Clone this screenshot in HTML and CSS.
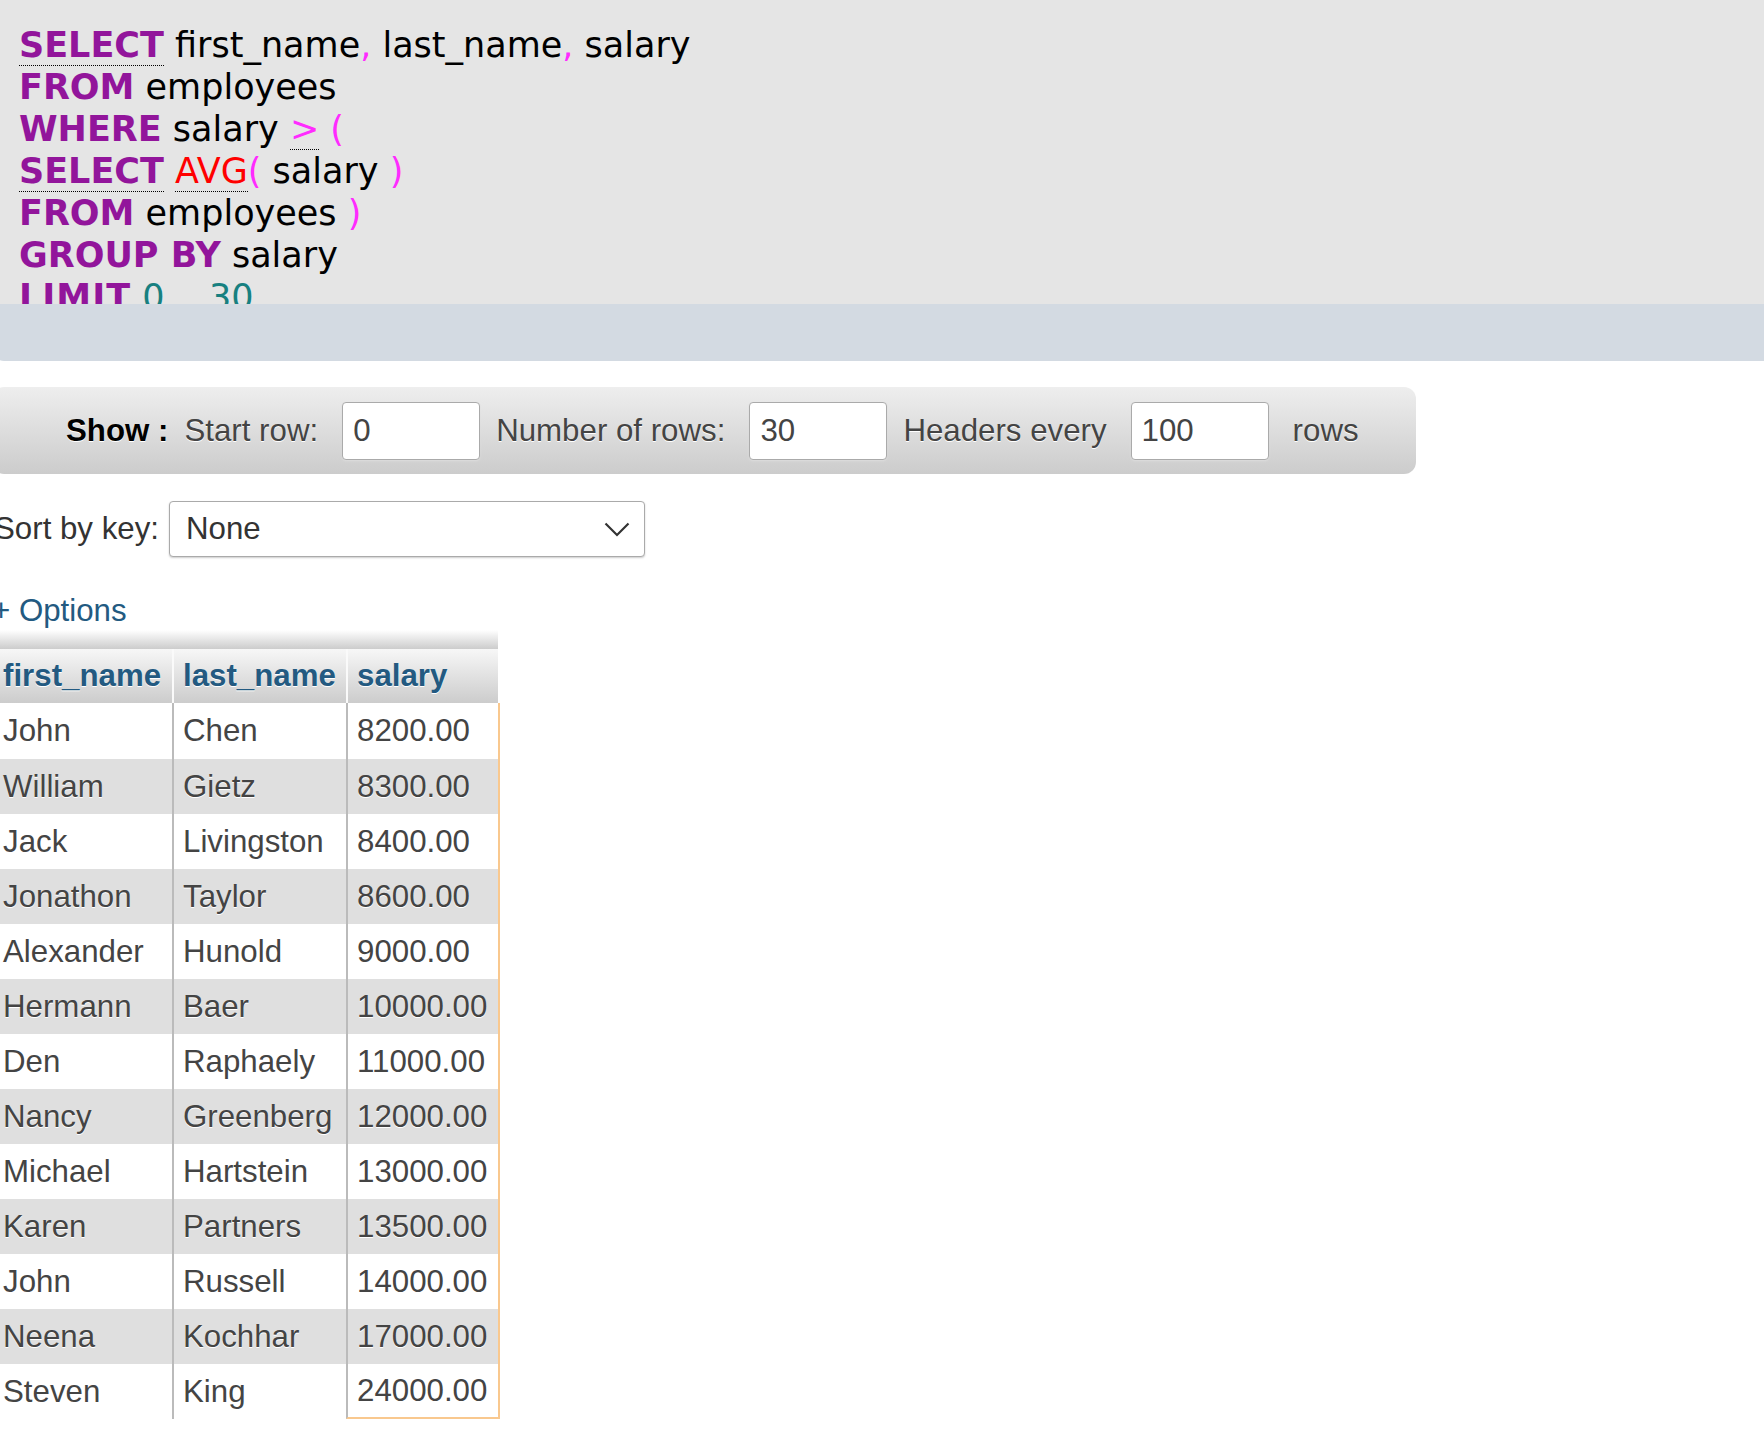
FILE: index.html
```html
<!DOCTYPE html>
<html lang="en">
<head>
<meta charset="utf-8">
<title>SQL result</title>
<link rel="stylesheet" href="styles.css">
</head>
<body>
<div class="page">
  <div class="sql-box">
<pre class="sql"><abbr class="kw">SELECT</abbr> first_name<span class="p">,</span> last_name<span class="p">,</span> salary
<span class="kw">FROM</span> employees
<span class="kw">WHERE</span> salary <abbr class="p">&gt;</abbr> <span class="p">(</span>
<abbr class="kw">SELECT</abbr> <abbr class="fn">AVG</abbr><span class="p">(</span> salary <span class="p">)</span>
<span class="kw">FROM</span> employees <span class="p">)</span>
<span class="kw">GROUP BY</span> salary
<span class="kw kw-limit">LIMIT</span> <span class="num">0</span> <span class="p">,</span>  <span class="num">30</span></pre>
  </div>
  <div class="sql-toolbar"></div>

  <form class="navbar">
    <span class="nav-title">Show :</span>
    <label class="nav-label">Start row:</label>
    <input class="nav-input" type="text" value="0">
    <label class="nav-label">Number of rows:</label>
    <input class="nav-input" type="text" value="30">
    <label class="nav-label">Headers every</label>
    <input class="nav-input" type="text" value="100">
    <span class="nav-label nav-rows">rows</span>
  </form>

  <div class="sort-row">
    <span class="sort-label">Sort by key:</span>
    <div class="select-box">
      <span class="select-value">None</span>
      <svg class="chevron" width="26" height="15" viewBox="0 0 26 15"><path d="M1.5 1.5 L13 13 L24.5 1.5" fill="none" stroke="#333" stroke-width="2.2"/></svg>
    </div>
  </div>

  <div class="options-link">+ Options</div>

  <div class="table-wrap">
    <div class="table-top"></div>
    <table class="data">
      <thead>
        <tr><th class="c1">first_name</th><th class="c2">last_name</th><th class="c3">salary</th></tr>
      </thead>
      <tbody>
        <tr><td>John</td><td>Chen</td><td>8200.00</td></tr>
        <tr><td>William</td><td>Gietz</td><td>8300.00</td></tr>
        <tr><td>Jack</td><td>Livingston</td><td>8400.00</td></tr>
        <tr><td>Jonathon</td><td>Taylor</td><td>8600.00</td></tr>
        <tr><td>Alexander</td><td>Hunold</td><td>9000.00</td></tr>
        <tr><td>Hermann</td><td>Baer</td><td>10000.00</td></tr>
        <tr><td>Den</td><td>Raphaely</td><td>11000.00</td></tr>
        <tr><td>Nancy</td><td>Greenberg</td><td>12000.00</td></tr>
        <tr><td>Michael</td><td>Hartstein</td><td>13000.00</td></tr>
        <tr><td>Karen</td><td>Partners</td><td>13500.00</td></tr>
        <tr><td>John</td><td>Russell</td><td>14000.00</td></tr>
        <tr><td>Neena</td><td>Kochhar</td><td>17000.00</td></tr>
        <tr><td>Steven</td><td>King</td><td>24000.00</td></tr>
      </tbody>
    </table>
  </div>
</div>
</body>
</html>
```

FILE: styles.css
```css
html, body {
  margin: 0;
  padding: 0;
  background: #fff;
}

body {
  font-family: "Liberation Sans", Arial, sans-serif;
  font-size: 31.25px;
  color: #444;
  overflow: hidden;
}

.page {
  margin-left: -8px;
}

/* SQL query box */
.sql-box {
  background: #e5e5e5;
  height: 304px;
  overflow: hidden;
  box-sizing: border-box;
  padding: 24px 0 0 27px;
}

.sql {
  margin: 0;
  font-family: "DejaVu Sans", sans-serif;
  font-size: 35px;
  line-height: 42px;
  color: #000;
  white-space: pre;
}

.sql abbr {
  text-decoration: none;
  border-bottom: 1px dotted #000;
}

.kw {
  color: #92159b;
  font-weight: bold;
}

.kw-limit {
  letter-spacing: 1px;
}

.p {
  color: #ff2bff;
}

.fn {
  color: #f00;
}

.num {
  color: #178080;
}

.sql-toolbar {
  background: #d3dae2;
  height: 57px;
  border-bottom-left-radius: 12px;
}

/* navigation bar */
.navbar {
  display: flex;
  align-items: center;
  gap: 16px;
  width: 1424px;
  height: 87px;
  box-sizing: border-box;
  margin: 26px 0 0 0;
  padding-left: 74px;
  border-radius: 12px;
  background: linear-gradient(#eeeeee, #cccccc);
  text-shadow: 0 1px 0 #fff;
}

.nav-title {
  font-weight: bold;
  color: #000;
}

.nav-label {
  color: #444;
}

.nav-input {
  width: 138px;
  height: 58px;
  box-sizing: border-box;
  margin-left: 8px;
  padding: 0 0 0 10px;
  border: 1px solid #aaa;
  border-radius: 4px;
  background: #fff;
  font-family: "Liberation Sans", Arial, sans-serif;
  font-size: 31.25px;
  color: #444;
  box-shadow: 0 1px 2px #ddd;
  outline: none;
}

.nav-rows {
  margin-left: 8px;
}

/* sort by key */
.sort-row {
  display: flex;
  align-items: center;
  margin-top: 27px;
  padding-left: 2px;
}

.sort-label {
  color: #333;
  margin-right: 10px;
}

.select-box {
  display: flex;
  align-items: center;
  justify-content: space-between;
  width: 476px;
  height: 56px;
  box-sizing: border-box;
  padding: 0 14px 0 16px;
  border: 1px solid #aaa;
  border-radius: 4px;
  background: #fff;
  box-shadow: 0 1px 2px #ccc;
  color: #333;
}

.chevron {
  display: block;
}

/* options link */
.options-link {
  margin-top: 36px;
  height: 36px;
  line-height: 36px;
  color: #235a81;
}

/* results table */
.table-wrap {
  margin-top: 1px;
}

.table-top {
  width: 506px;
  height: 19px;
  background: linear-gradient(#ffffff, #cccccc);
}

.data {
  border-collapse: separate;
  border-spacing: 0;
  table-layout: fixed;
}

.data th,
.data td {
  box-sizing: border-box;
  padding: 0 0 0 11px;
  text-align: left;
  white-space: nowrap;
  text-shadow: 0 1px 0 #fff;
}

.data th + th,
.data td + td {
  padding-left: 9px;
}

.data th {
  height: 54px;
  font-weight: bold;
  color: #235a81;
  background: linear-gradient(#f7f7f7, #cccccc);
  background-clip: padding-box;
}

.data th.c1 { width: 180px; }
.data th.c2 { width: 174px; border-left: 2px solid #fafafa; }
.data th.c3 { width: 154px; border-left: 2px solid #fafafa; border-right: 2px solid transparent; }

.data td {
  height: 55px;
  color: #444;
}

.data tbody tr:first-child td {
  height: 56px;
}

.data td + td {
  border-left: 2px solid #bbb;
}

.data td:last-child {
  border-right: 2px solid #f9c88e;
}

.data tbody tr:nth-child(even) td {
  background: #dfdfdf;
}

.data tbody tr:last-child td:last-child {
  border-bottom: 2px solid #f9c88e;
}
```
